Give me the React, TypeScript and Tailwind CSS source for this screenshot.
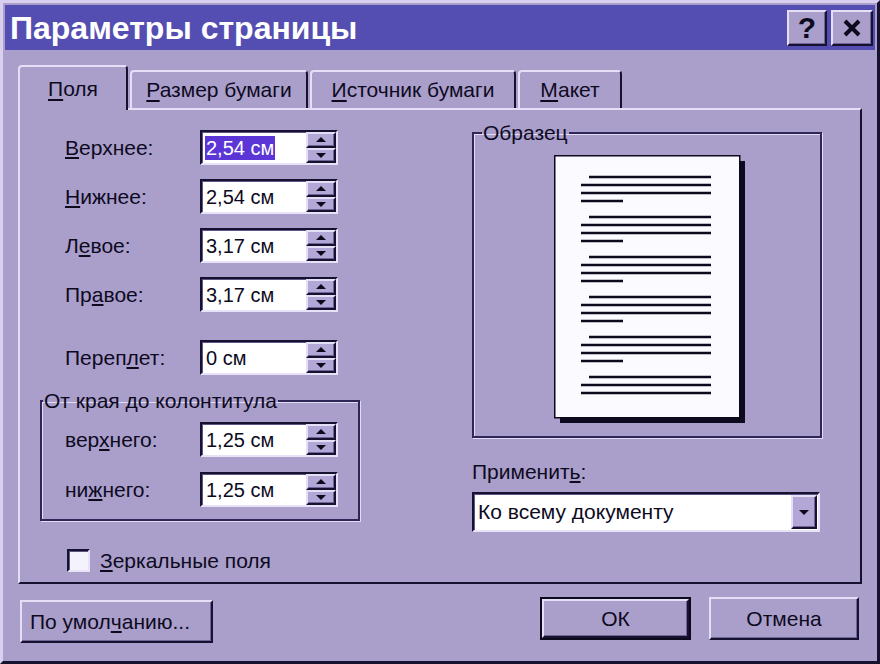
const raised =
  "border-2 border-t-[#e4def6] border-l-[#e4def6] border-r-[#15112e] border-b-[#15112e] shadow-[inset_-1px_-1px_0_#6f6596]";
const sunken =
  "border-2 border-t-[#15112e] border-l-[#15112e] border-r-[#e8e2f8] border-b-[#e8e2f8] shadow-[inset_1px_1px_0_#5d5488]";
const etched =
  "border-2 border-[#2e2658] shadow-[inset_1px_1px_0_#e2dcf4,1px_1px_0_#e2dcf4]";

function Arrow({ down }: { down?: boolean }) {
  return (
    <svg width="12" height="7" viewBox="0 0 12 7">
      <path d={down ? "M1 1h10L6 6z" : "M6 1l5 5H1z"} fill="#0d0a1e" />
    </svg>
  );
}

function Spin({ value, selected }: { value: string; selected?: boolean }) {
  return (
    <div className={`flex h-[35px] w-[138px] bg-white ${sunken}`}>
      <div className="flex flex-1 items-center pl-[3px] text-[20px] leading-none">
        <span className={selected ? "bg-[#5b35d6] px-[1px] py-[2px] text-white" : "px-[1px]"}>{value}</span>
      </div>
      <div className="flex w-[30px] flex-col">
        <div className={`flex flex-1 items-center justify-center bg-[#b2a7d6] ${raised}`}>
          <Arrow />
        </div>
        <div className={`flex flex-1 items-center justify-center bg-[#b2a7d6] ${raised}`}>
          <Arrow down />
        </div>
      </div>
    </div>
  );
}

function Row({ label, value, selected }: { label: React.ReactNode; value: string; selected?: boolean }) {
  return (
    <div className="flex h-[35px] items-center">
      <div className="w-[135px]">{label}</div>
      <Spin value={value} selected={selected} />
    </div>
  );
}

function PagePreview() {
  const groups = [0, 1, 2, 3, 4, 5];
  return (
    <svg width="191" height="268" viewBox="0 0 191 268">
      <rect x="6" y="6" width="185" height="262" fill="#0d0a1e" />
      <rect x="0.75" y="0.75" width="185" height="262" fill="#fbfaff" stroke="#0d0a1e" strokeWidth="1.5" />
      {groups.map((g) => {
        const y = 22 + g * 40;
        return (
          <g key={g} stroke="#0d0a1e" strokeWidth="2.5">
            <line x1="35" y1={y} x2="157" y2={y} />
            <line x1="27" y1={y + 8} x2="157" y2={y + 8} />
            <line x1="27" y1={y + 16} x2="157" y2={y + 16} />
            {g < 5 && <line x1="27" y1={y + 24} x2="69" y2={y + 24} />}
          </g>
        );
      })}
    </svg>
  );
}

export default function App() {
  const tabs = [
    { key: "П", rest: "оля", w: "w-[110px]", active: true },
    { key: "Р", rest: "азмер бумаги", w: "w-[178px]" },
    { key: "И", rest: "сточник бумаги", w: "w-[206px]" },
    { key: "М", rest: "акет", w: "w-[104px]" },
  ];

  return (
    <div className="flex h-[664px] w-[880px] flex-col overflow-hidden border-t-[3px] border-l-[3px] border-r-[3px] border-b-[3px] border-t-[#d8d0ee] border-l-[#d8d0ee] border-r-[#15112e] border-b-[#15112e] bg-[#aa9ecb] p-[2px] font-['Liberation_Sans',Arial,sans-serif] text-[21px] text-[#0d0a1e]">
      {/* title bar */}
      <div className="flex h-[45px] items-center justify-between bg-[#544eb2] pl-[5px] pr-[2px]">
        <span className="text-[32px] font-bold leading-none text-white">Параметры страницы</span>
        <div className="flex gap-[4px]">
          <div className={`flex h-[36px] w-[40px] items-center justify-center bg-[#aa9ecb] ${raised}`}>
            <span className="text-[30px] font-black leading-none">?</span>
          </div>
          <div className={`flex h-[36px] w-[42px] items-center justify-center bg-[#aa9ecb] ${raised}`}>
            <svg width="20" height="20" viewBox="0 0 20 20">
              <path d="M3 3l14 14M17 3L3 17" stroke="#0d0a1e" strokeWidth="4" />
            </svg>
          </div>
        </div>
      </div>

      <div className="flex flex-col px-[13px] pt-[15px]">
        {/* tabs */}
        <div className="flex h-[43px] items-end gap-[2px]">
          {tabs.map((t) => (
            <div
              key={t.key}
              className={`${t.w} relative flex items-center justify-center rounded-t-[4px] border-t-2 border-l-2 border-r-2 border-t-[#e4def6] border-l-[#e4def6] border-r-[#15112e] bg-[#aa9ecb] ${
                t.active ? "z-10 -mb-[2px] h-[45px]" : "h-[38px]"
              }`}
            >
              <span>
                <u className="underline-offset-[3px]">{t.key}</u>
                {t.rest}
              </span>
            </div>
          ))}
        </div>

        {/* panel */}
        <div className="flex h-[476px] w-[844px] border-2 border-t-[#e4def6] border-l-[#e4def6] border-r-[#15112e] border-b-[#15112e]">
          {/* left column */}
          <div className="flex w-[452px] flex-col">
            <div className="flex flex-col gap-[14px] pt-[20px] pl-[45px]">
              <Row label={<><u>В</u>ерхнее:</>} value="2,54 см" selected />
              <Row label={<><u>Н</u>ижнее:</>} value="2,54 см" />
              <Row label={<>Л<u>е</u>вое:</>} value="3,17 см" />
              <Row label={<>Пр<u>а</u>вое:</>} value="3,17 см" />
            </div>
            <div className="mt-[28px] pl-[45px]">
              <Row label={<>Переп<u>л</u>ет:</>} value="0 см" />
            </div>
            <fieldset className={`mt-[15px] ml-[20px] w-[320px] pb-[12px] pl-[23px] ${etched}`}>
              <legend className="-ml-[22px] px-[1px] leading-[22px]">От края до колонтитула</legend>
              <div className="mt-[10px] flex flex-col gap-[15px]">
                <Row label={<>вер<u>х</u>него:</>} value="1,25 см" />
                <Row label={<>ни<u>ж</u>него:</>} value="1,25 см" />
              </div>
            </fieldset>
            <div className="mt-[24px] flex items-center gap-[10px] pl-[47px]">
              <div className={`h-[23px] w-[23px] bg-[#f4f2fb] ${sunken}`} />
              <span>
                <u>З</u>еркальные поля
              </span>
            </div>
          </div>

          {/* right column */}
          <div className="flex w-[350px] flex-col">
            <fieldset className={`mt-[12px] flex h-[316px] flex-col ${etched}`}>
              <legend className="ml-[8px] px-[1px] leading-[22px]">Образец</legend>
              <div className="mt-[11px] flex justify-center pl-[4px]">
                <PagePreview />
              </div>
            </fieldset>
            <div className="mt-[23px] leading-[22px]">
              Применит<u>ь</u>:
            </div>
            <div className={`mt-[9px] flex h-[40px] w-[348px] bg-white ${sunken}`}>
              <div className="flex flex-1 items-center pl-[4px]">Ко всему документу</div>
              <div className={`m-[1px] flex w-[26px] items-center justify-center bg-[#b2a7d6] ${raised}`}>
                <Arrow down />
              </div>
            </div>
          </div>
        </div>

        {/* bottom buttons */}
        <div className="mt-[13px] flex items-start pl-[2px] pr-[3px]">
          <div className={`mt-[3px] flex h-[43px] w-[193px] items-center pl-[8px] ${raised}`}>
            По умол<u>ч</u>анию...
          </div>
          <div className="ml-auto h-[43px] w-[151px] border-2 border-[#0d0a1e]">
            <div className={`flex h-full w-full items-center justify-center ${raised}`}>ОК</div>
          </div>
          <div className={`ml-[18px] flex h-[43px] w-[150px] items-center justify-center ${raised}`}>Отмена</div>
        </div>
      </div>
    </div>
  );
}
